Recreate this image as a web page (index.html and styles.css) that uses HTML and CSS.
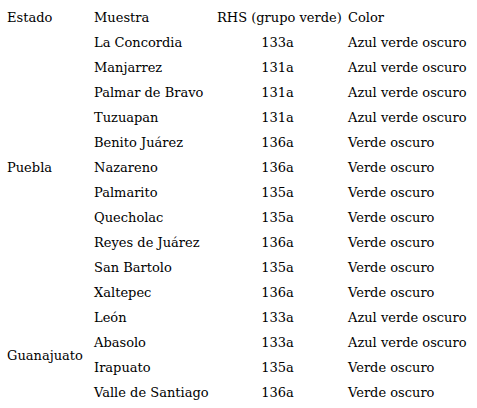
FILE: index.html
```html
<!DOCTYPE html>
<html lang="es">
<head>
<meta charset="utf-8">
<link rel="stylesheet" href="styles.css">
</head>
<body>
<table class="data">
  <thead>
    <tr><th class="c-state">Estado</th><th class="c-sample">Muestra</th><th class="c-rhs">RHS (grupo verde)</th><th class="c-color">Color</th></tr>
  </thead>
  <tbody>
    <tr><td class="c-state"></td><td class="c-sample">La Concordia</td><td class="c-rhs num">133a</td><td class="c-color">Azul verde oscuro</td></tr>
    <tr><td class="c-state"></td><td class="c-sample">Manjarrez</td><td class="c-rhs num">131a</td><td class="c-color">Azul verde oscuro</td></tr>
    <tr><td class="c-state"></td><td class="c-sample">Palmar de Bravo</td><td class="c-rhs num">131a</td><td class="c-color">Azul verde oscuro</td></tr>
    <tr><td class="c-state"></td><td class="c-sample">Tuzuapan</td><td class="c-rhs num">131a</td><td class="c-color">Azul verde oscuro</td></tr>
    <tr><td class="c-state"></td><td class="c-sample">Benito Juárez</td><td class="c-rhs num">136a</td><td class="c-color">Verde oscuro</td></tr>
    <tr><td class="c-state">Puebla</td><td class="c-sample">Nazareno</td><td class="c-rhs num">136a</td><td class="c-color">Verde oscuro</td></tr>
    <tr><td class="c-state"></td><td class="c-sample">Palmarito</td><td class="c-rhs num">135a</td><td class="c-color">Verde oscuro</td></tr>
    <tr><td class="c-state"></td><td class="c-sample">Quecholac</td><td class="c-rhs num">135a</td><td class="c-color">Verde oscuro</td></tr>
    <tr><td class="c-state"></td><td class="c-sample">Reyes de Juárez</td><td class="c-rhs num">136a</td><td class="c-color">Verde oscuro</td></tr>
    <tr><td class="c-state"></td><td class="c-sample">San Bartolo</td><td class="c-rhs num">135a</td><td class="c-color">Verde oscuro</td></tr>
    <tr><td class="c-state"></td><td class="c-sample">Xaltepec</td><td class="c-rhs num">136a</td><td class="c-color">Verde oscuro</td></tr>
    <tr><td class="c-state"></td><td class="c-sample">León</td><td class="c-rhs num">133a</td><td class="c-color">Azul verde oscuro</td></tr>
    <tr><td class="c-state" rowspan="2">Guanajuato</td><td class="c-sample">Abasolo</td><td class="c-rhs num">133a</td><td class="c-color">Azul verde oscuro</td></tr>
    <tr><td class="c-sample">Irapuato</td><td class="c-rhs num">135a</td><td class="c-color">Verde oscuro</td></tr>
    <tr><td class="c-state"></td><td class="c-sample">Valle de Santiago</td><td class="c-rhs num">136a</td><td class="c-color">Verde oscuro</td></tr>
  </tbody>
</table>
</body>
</html>
```

FILE: styles.css
```css
html, body {
  margin: 0;
  padding: 0;
  background: #ffffff;
}
body {
  padding: 5px 0 0 7px;
  font-family: "DejaVu Serif", serif;
  font-size: 13px;
  color: #000000;
}
.data {
  border-collapse: collapse;
  border-spacing: 0;
  table-layout: fixed;
  width: 470px;
}
.data th,
.data td {
  padding: 0;
  height: 25px;
  line-height: 25px;
  font-weight: normal;
  text-align: left;
  vertical-align: middle;
  white-space: nowrap;
  box-sizing: border-box;
}
.data .c-state { width: 87px; }
.data .c-sample { width: 123px; }
.data .c-rhs { width: 131px; }
.data .num { text-align: center; padding-right: 10px; }
```
